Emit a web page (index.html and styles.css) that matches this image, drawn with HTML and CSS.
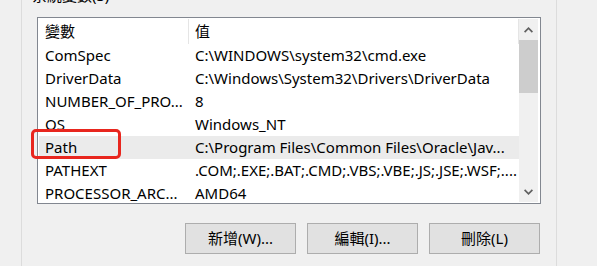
FILE: index.html
```html
<!DOCTYPE html>
<html lang="zh-Hant">
<head>
<meta charset="utf-8">
<link rel="stylesheet" href="styles.css">
</head>
<body>
<div class="group">
  <div class="legend">系統變數(S)</div>
  <div class="listbox">
    <div class="table">
      <div class="header">
        <div class="cell col1">變數</div>
        <div class="cell col2">值</div>
      </div>
      <div class="row"><div class="cell col1">ComSpec</div><div class="cell col2">C:\WINDOWS\system32\cmd.exe</div></div>
      <div class="row"><div class="cell col1">DriverData</div><div class="cell col2">C:\Windows\System32\Drivers\DriverData</div></div>
      <div class="row"><div class="cell col1">NUMBER_OF_PRO...</div><div class="cell col2">8</div></div>
      <div class="row"><div class="cell col1">OS</div><div class="cell col2">Windows_NT</div></div>
      <div class="row selected"><div class="cell col1">Path</div><div class="cell col2">C:\Program Files\Common Files\Oracle\Jav...</div></div>
      <div class="row"><div class="cell col1">PATHEXT</div><div class="cell col2">.COM;.EXE;.BAT;.CMD;.VBS;.VBE;.JS;.JSE;.WSF;....</div></div>
      <div class="row"><div class="cell col1">PROCESSOR_ARC...</div><div class="cell col2">AMD64</div></div>
    </div>
    <div class="scrollbar">
      <div class="sb-btn"><svg width="9" height="6" viewBox="0 0 9 6"><polyline points="0.6,5.2 4.5,1.2 8.4,5.2" fill="none" stroke="#606060" stroke-width="1.7"/></svg></div>
      <div class="track"><div class="thumb"></div></div>
      <div class="sb-btn"><svg width="9" height="6" viewBox="0 0 9 6"><polyline points="0.6,0.8 4.5,4.8 8.4,0.8" fill="none" stroke="#606060" stroke-width="1.7"/></svg></div>
    </div>
    <div class="mark"></div>
  </div>
  <div class="buttons">
    <button class="btn">新增(W)...</button>
    <button class="btn">編輯(I)...</button>
    <button class="btn">刪除(L)</button>
  </div>
</div>
</body>
</html>
```
FILE: styles.css
```css
html, body {
  margin: 0;
  background: #f0f0f0;
}
body {
  font: 15px/19px "Noto Sans", "Noto Sans CJK TC", sans-serif;
  color: #000;
  height: 266px;
  overflow: hidden;
}
.group {
  margin: -5px 0 0 21px;
  width: 536px;
  box-sizing: border-box;
  border: 1px solid #dcdcdc;
  padding: 0 15px 30px;
}
.legend {
  width: max-content;
  margin: -10px 0 0 -7px;
  padding: 0 2px;
  height: 19px;
  background: #f0f0f0;
}
.listbox {
  position: relative;
  margin-top: 12px;
  height: 187px;
  box-sizing: border-box;
  border: 1px solid #828790;
  padding: 1px;
  background: #fff;
  display: flex;
}
.table {
  flex: 1;
  overflow: hidden;
}
.header {
  display: flex;
  height: 25px;
}
.header .cell {
  line-height: 25px;
  border-right: 1px solid #e5e5e5;
}
.row {
  display: flex;
  height: 23px;
  line-height: 23px;
}
.row.selected {
  background: #ebebeb;
}
.cell {
  white-space: nowrap;
  overflow: hidden;
  box-sizing: border-box;
}
.col1 {
  width: 150px;
  padding-left: 6px;
}
.row .col1 {
  padding-right: 1px;
}
.col2 {
  flex: 1;
  padding-left: 6px;
}
.scrollbar {
  width: 19px;
  margin-right: 1px;
  display: flex;
  flex-direction: column;
  background: #f0f0f0;
}
.sb-btn {
  height: 21px;
  display: flex;
  align-items: center;
  justify-content: center;
}
.sb-btn svg {
  display: block;
}
.track {
  flex: 1;
}
.thumb {
  height: 53px;
  background: #cdcdcd;
}
.mark {
  position: absolute;
  left: -7px;
  top: 111px;
  width: 90px;
  height: 30px;
  box-sizing: border-box;
  border: 3px solid #e8261e;
  border-radius: 5px;
}
.buttons {
  display: flex;
  justify-content: flex-end;
  gap: 11px;
  margin-top: 19px;
  padding-right: 1px;
}
.btn {
  width: 111px;
  height: 31px;
  box-sizing: border-box;
  border: 1px solid #adadad;
  border-radius: 0;
  background: #e1e1e1;
  font: inherit;
  color: #000;
  padding: 0;
  margin: 0;
}
```
